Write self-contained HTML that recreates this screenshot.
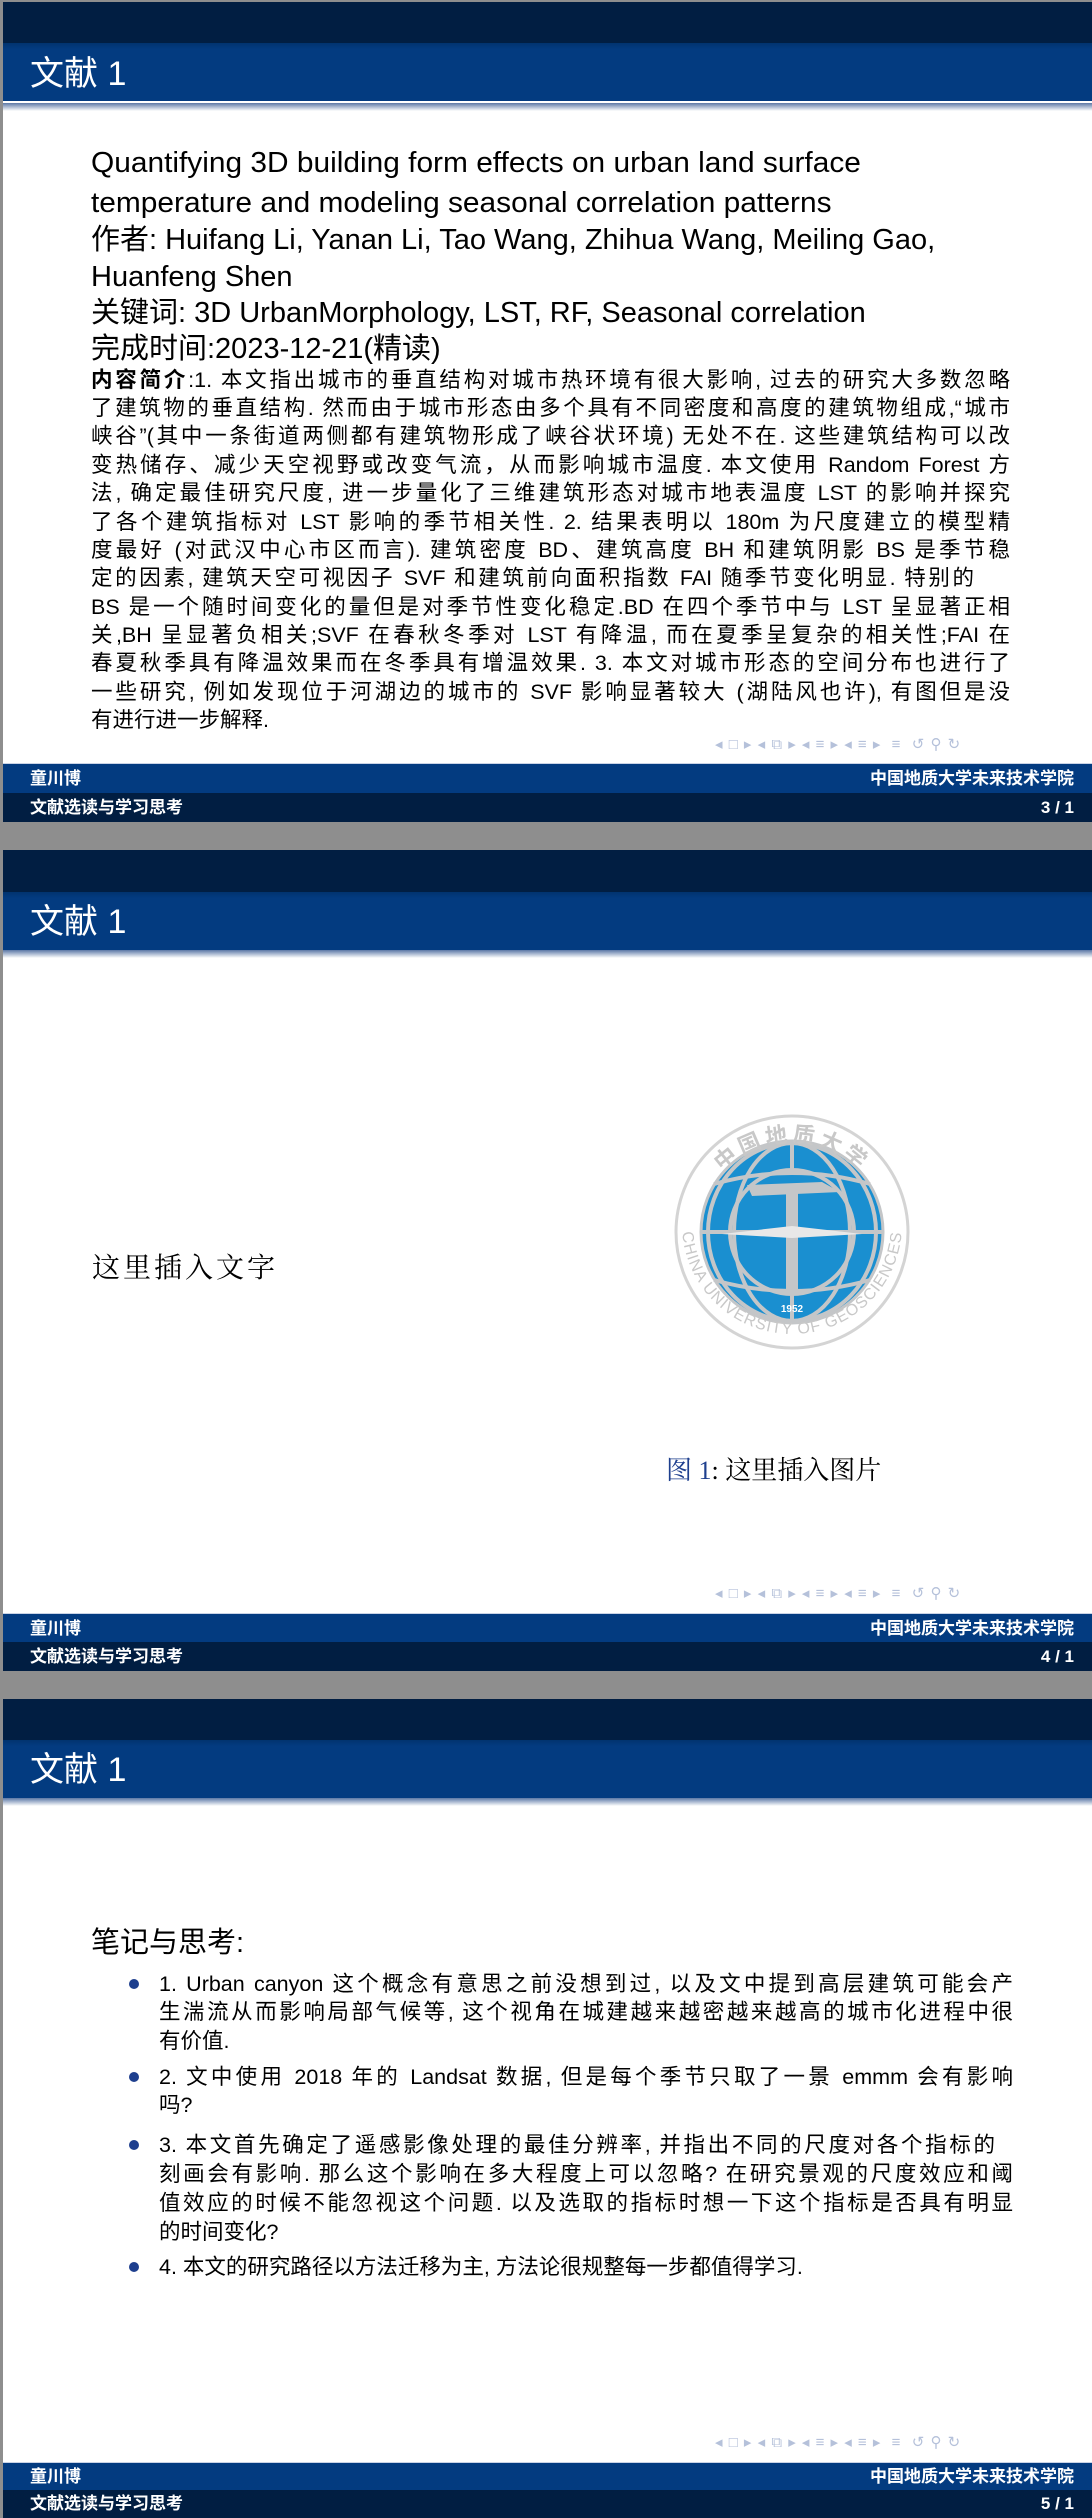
<!DOCTYPE html>
<html><head><meta charset="utf-8">
<style>
*{margin:0;padding:0;box-sizing:border-box}
body{width:1092px;height:2518px;background:#8e8e8e;position:relative;overflow:hidden;font-family:"Liberation Sans","Noto Sans CJK SC",sans-serif;color:#000}
.slide{position:absolute;left:3px;width:1089px;height:822px;background:#fff;overflow:hidden}
.top{position:absolute;left:0;top:0;width:100%;height:43px;background:#011e42}
.tbar{position:absolute;left:0;top:43px;width:100%;height:58px;background:linear-gradient(#01336f 0,#033b80 6px,#033b80 100%)}
.tshadow{position:absolute;left:0;top:101px;width:100%;height:8px;background:linear-gradient(#5b77a6,#fff)}
.ttl{position:absolute;left:27px;top:52px;color:#fff;font-size:34px;line-height:44px;font-family:"Liberation Sans","Noto Sans CJK SC",sans-serif}
.f1{position:absolute;left:0;top:763px;width:100%;height:30px;background:#033b80;color:#fff;font-size:17px;font-weight:bold;line-height:30px;border-top:1px solid #c9d3e6}
.f2{position:absolute;left:0;top:793px;width:100%;height:29px;background:#011e42;color:#fff;font-size:17px;font-weight:bold;line-height:29px}
.fl{position:absolute;left:27px}
.fr{position:absolute;right:18px}
.nav{position:absolute;left:712px;top:735px;width:377px;height:20px;color:#b5c1da;font-size:15px;line-height:20px;white-space:nowrap;letter-spacing:1px}
.L{position:absolute;white-space:nowrap;font-family:"Liberation Sans","Noto Sans CJK SC",sans-serif}
.big{font-size:29px;line-height:36px;left:88px;transform-origin:left center}
.sm{font-size:21.5px;line-height:28px;left:88px;width:919px;text-align:justify;text-align-last:justify;white-space:normal;height:28px;overflow:hidden}
.bl{font-size:21.5px;line-height:28px;left:156px;width:854px;text-align:justify;text-align-last:justify;white-space:normal;height:28px;overflow:hidden}
.nj{text-align:left;text-align-last:left}
.dot{position:absolute;left:126px;width:10px;height:10px;border-radius:50%;background:#1e3f8e}
</style></head><body>

<!-- Slide 1 -->
<div class="slide" style="top:2px;height:820px">
<div class="top" style="height:41px"></div>
<div class="tbar" style="top:41px"></div><div class="tshadow"></div>
<div class="ttl" style="top:50px">文献 1</div>
<div class="L big" style="top:143px;transform:scaleX(1.03)">Quantifying 3D building form effects on urban land surface</div>
<div class="L big" style="top:183px;transform:scaleX(1.03)">temperature and modeling seasonal correlation patterns</div>
<div class="L big" style="top:220px">作者: Huifang Li, Yanan Li, Tao Wang, Zhihua Wang, Meiling Gao,</div>
<div class="L big" style="top:257px">Huanfeng Shen</div>
<div class="L big" style="top:293px">关键词: 3D UrbanMorphology, LST, RF, Seasonal correlation</div>
<div class="L big" style="top:329px">完成时间:2023-12-21(精读)</div>
<div class="L sm" style="top:364px"><b>内容简介</b>:1. 本文指出城市的垂直结构对城市热环境有很大影响, 过去的研究大多数忽略</div>
<div class="L sm" style="top:392px">了建筑物的垂直结构. 然而由于城市形态由多个具有不同密度和高度的建筑物组成,“城市</div>
<div class="L sm" style="top:420px">峡谷”(其中一条街道两侧都有建筑物形成了峡谷状环境) 无处不在. 这些建筑结构可以改</div>
<div class="L sm" style="top:449px">变热储存、减少天空视野或改变气流，从而影响城市温度. 本文使用 Random Forest 方</div>
<div class="L sm" style="top:477px">法, 确定最佳研究尺度, 进一步量化了三维建筑形态对城市地表温度 LST 的影响并探究</div>
<div class="L sm" style="top:506px">了各个建筑指标对 LST 影响的季节相关性. 2. 结果表明以 180m 为尺度建立的模型精</div>
<div class="L sm" style="top:534px">度最好 (对武汉中心市区而言). 建筑密度 BD、建筑高度 BH 和建筑阴影 BS 是季节稳</div>
<div class="L sm" style="top:562px;width:883px">定的因素, 建筑天空可视因子 SVF 和建筑前向面积指数 FAI 随季节变化明显. 特别的</div>
<div class="L sm" style="top:591px">BS 是一个随时间变化的量但是对季节性变化稳定.BD 在四个季节中与 LST 呈显著正相</div>
<div class="L sm" style="top:619px">关,BH 呈显著负相关;SVF 在春秋冬季对 LST 有降温, 而在夏季呈复杂的相关性;FAI 在</div>
<div class="L sm" style="top:647px">春夏秋季具有降温效果而在冬季具有增温效果. 3. 本文对城市形态的空间分布也进行了</div>
<div class="L sm" style="top:676px">一些研究, 例如发现位于河湖边的城市的 SVF 影响显著较大 (湖陆风也许), 有图但是没</div>
<div class="L sm nj" style="top:704px">有进行进一步解释.</div>
<div class="nav" style="top:733px">◂ □ ▸ ◂ ⧉ ▸ ◂ ≡ ▸ ◂ ≡ ▸ &nbsp;≡ &nbsp;↺ ⚲ ↻</div>
<div class="f1" style="top:761px"><span class="fl">童川博</span><span class="fr">中国地质大学未来技术学院</span></div>
<div class="f2" style="top:791px"><span class="fl">文献选读与学习思考</span><span class="fr">3 / 1</span></div>
</div>

<!-- Slide 2 -->
<div class="slide" style="top:850px;height:821px">
<div class="top" style="height:42px"></div>
<div class="tbar" style="top:42px"></div><div class="tshadow" style="top:100px"></div>
<div class="ttl" style="top:50px">文献 1</div>
<div class="L" style="left:89px;top:402px;font-size:28px;line-height:34px;letter-spacing:3px;font-family:'Liberation Serif','Noto Serif CJK SC',serif">这里插入文字</div>
<svg style="position:absolute;left:669px;top:262px" width="240" height="240" viewBox="-120 -120 240 240">
<defs><path id="arc1" d="M-96,6 A96,96 0 0,1 96,6"/><path id="arc2" d="M-110,-8 A110,110 0 0,0 110,-8"/></defs>
<circle r="116" fill="#fff" stroke="#d4d4d4" stroke-width="3"/>
<circle r="91" fill="#1a8fd0" stroke="#c4c6c8" stroke-width="3"/>
<g stroke="#c4c6c8" stroke-width="4" fill="none">
<line x1="-91" y1="0" x2="91" y2="0"/>
<ellipse rx="58" ry="89"/>
<ellipse rx="84" ry="89"/>
<circle r="62"/>
<path d="M-78,-48 Q0,-70 78,-48 M-78,48 Q0,70 78,48"/>
<line x1="0" y1="-91" x2="0" y2="-62"/><line x1="0" y1="62" x2="0" y2="91"/>
</g>
<path d="M-45,-47 L30,-50 L48,-40 L-40,-36 Z" fill="#c4c6c8"/>
<rect x="-6" y="-42" width="12" height="100" fill="#c4c6c8"/>
<path d="M-70,2 L0,-6 L70,2 L0,6Z" fill="#e8e8e8"/>
<text x="0" y="80" font-size="10" font-weight="bold" fill="#fff" text-anchor="middle" font-family="Liberation Sans">1952</text>
<text font-size="22" fill="#c8c8c8" font-weight="bold" font-family="Noto Sans CJK SC"><textPath href="#arc1" startOffset="50%" text-anchor="middle" letter-spacing="4">中国地质大学</textPath></text>
<text font-size="16" fill="#c8c8c8" font-family="Liberation Sans"><textPath href="#arc2" startOffset="50%" text-anchor="middle" letter-spacing="1">CHINA UNIVERSITY OF GEOSCIENCES</textPath></text>
</svg>
<div class="L" style="left:663px;top:604px;font-size:26px;line-height:34px;font-family:'Liberation Serif','Noto Serif CJK SC',serif"><span style="color:#1e3f8e">图 1</span>: 这里插入图片</div>
<div class="nav" style="top:734px">◂ □ ▸ ◂ ⧉ ▸ ◂ ≡ ▸ ◂ ≡ ▸ &nbsp;≡ &nbsp;↺ ⚲ ↻</div>
<div class="f1"><span class="fl">童川博</span><span class="fr">中国地质大学未来技术学院</span></div>
<div class="f2" style="top:792px"><span class="fl">文献选读与学习思考</span><span class="fr">4 / 1</span></div>
</div>

<!-- Slide 3 -->
<div class="slide" style="top:1699px;height:819px">
<div class="top" style="height:41px"></div>
<div class="tbar" style="top:41px"></div><div class="tshadow" style="top:99px"></div>
<div class="ttl" style="top:49px">文献 1</div>
<div class="L" style="left:88px;top:226px;font-size:29px;line-height:36px">笔记与思考:</div>
<div class="dot" style="top:280px"></div>
<div class="L bl" style="top:271px">1. Urban canyon 这个概念有意思之前没想到过, 以及文中提到高层建筑可能会产</div>
<div class="L bl" style="top:299px">生湍流从而影响局部气候等, 这个视角在城建越来越密越来越高的城市化进程中很</div>
<div class="L bl nj" style="top:328px">有价值.</div>
<div class="dot" style="top:373px"></div>
<div class="L bl" style="top:364px">2. 文中使用 2018 年的 Landsat 数据, 但是每个季节只取了一景 emmm 会有影响</div>
<div class="L bl nj" style="top:392px">吗?</div>
<div class="dot" style="top:441px"></div>
<div class="L bl" style="top:432px;width:836px">3. 本文首先确定了遥感影像处理的最佳分辨率, 并指出不同的尺度对各个指标的</div>
<div class="L bl" style="top:461px">刻画会有影响. 那么这个影响在多大程度上可以忽略? 在研究景观的尺度效应和阈</div>
<div class="L bl" style="top:490px">值效应的时候不能忽视这个问题. 以及选取的指标时想一下这个指标是否具有明显</div>
<div class="L bl nj" style="top:519px">的时间变化?</div>
<div class="dot" style="top:563px"></div>
<div class="L bl nj" style="top:554px">4. 本文的研究路径以方法迁移为主, 方法论很规整每一步都值得学习.</div>
<div class="nav" style="top:734px">◂ □ ▸ ◂ ⧉ ▸ ◂ ≡ ▸ ◂ ≡ ▸ &nbsp;≡ &nbsp;↺ ⚲ ↻</div>
<div class="f1" style="top:763px;height:28px;line-height:28px"><span class="fl">童川博</span><span class="fr">中国地质大学未来技术学院</span></div>
<div class="f2" style="top:791px;height:28px;line-height:28px"><span class="fl">文献选读与学习思考</span><span class="fr">5 / 1</span></div>
</div>

</body></html>
